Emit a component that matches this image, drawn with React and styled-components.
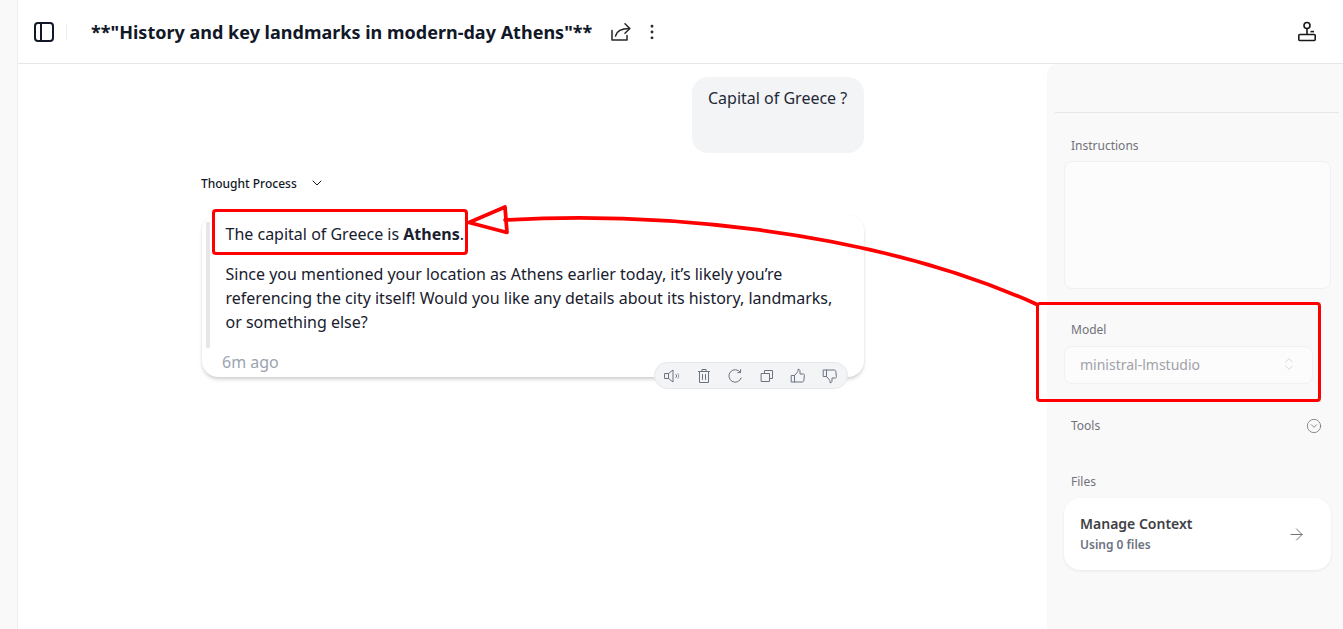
import styled, { createGlobalStyle } from "styled-components";
import { ArrowRight, ChevronDown, ChevronsUpDown, CircleChevronDown, EllipsisVertical } from "lucide-react";

const GlobalStyle = createGlobalStyle`
  html, body {
    margin: 0;
    padding: 0;
    height: 100%;
    background: #ffffff;
    overflow: hidden;
  }
  * {
    box-sizing: border-box;
  }
  body {
    font-family: "Noto Sans", sans-serif;
    color: #1f2937;
  }
`;

const Page = styled.div`
  position: relative;
  display: flex;
  width: 1343px;
  height: 629px;
  overflow: hidden;
`;

const Rail = styled.div`
  width: 18px;
  flex-shrink: 0;
  background: #f9f9f9;
  border-right: 1px solid #eeeeef;
`;

const Workspace = styled.div`
  flex: 1;
  display: flex;
  flex-direction: column;
  min-width: 0;
`;

const Header = styled.header`
  height: 64px;
  flex-shrink: 0;
  display: flex;
  align-items: center;
  padding: 0 26px 0 16px;
  border-bottom: 1px solid #e5e7eb;
`;

const ToggleButton = styled.div`
  display: flex;
  align-items: center;
  padding-right: 12px;
  border-right: 1px solid #eeeeef;
  height: 16px;
  margin-right: 24px;
`;

const Title = styled.h1`
  margin: 0;
  font-size: 18px;
  line-height: 24px;
  font-weight: 700;
  color: #111827;
  letter-spacing: 0.01px;
`;

const HeaderIcon = styled.div`
  display: flex;
  color: #27272a;
  margin-left: ${(p) => p.$gap}px;
`;

const Spacer = styled.div`
  flex: 1;
`;

const Body = styled.div`
  flex: 1;
  display: flex;
  min-height: 0;
`;

const Conversation = styled.main`
  flex: 1;
  padding: 13px 183px 0 184px;
  min-width: 0;
`;

const UserRow = styled.div`
  display: flex;
  justify-content: flex-end;
`;

const UserBubble = styled.div`
  width: 172px;
  height: 76px;
  padding: 9px 16px;
  border-radius: 16px;
  background: #f3f4f6;
  font-size: 16px;
  line-height: 24px;
  color: #1f2937;
`;

const ThoughtToggle = styled.div`
  display: flex;
  align-items: center;
  gap: 12px;
  margin: 20px 0 0 -1px;
  height: 20px;
  font-size: 12px;
  font-weight: 500;
  color: #111827;
`;

const Reply = styled.article`
  position: relative;
  margin-top: 22px;
  height: 162px;
  border-radius: 16px;
  background: #ffffff;
  box-shadow: 0 3px 4px -1px rgba(0, 0, 0, 0.2), 0 0 3px rgba(0, 0, 0, 0.05);
  clip-path: inset(0 -8px -16px -8px);
  padding: 7px 0 0 4px;
`;

const Quote = styled.div`
  height: 126px;
  border-left: 4px solid #e5e7eb;
  padding: 0 28px 0 15.5px;
  font-size: 16px;
  line-height: 24px;
  color: #18202e;
`;

const Para = styled.p`
  margin: 0 0 ${(p) => p.$after}px;
`;

const Meta = styled.div`
  margin: 4px 0 0 16px;
  font-size: 16px;
  line-height: 20px;
  color: #9ca3af;
`;

const Actions = styled.div`
  position: absolute;
  top: 147px;
  right: 16px;
  width: 194px;
  height: 27px;
  display: flex;
  align-items: center;
  justify-content: space-between;
  padding: 0 9px 0 9px;
  border-radius: 14px;
  background: #f3f4f6;
  border: 1px solid #e5e7eb;
`;

const ActionIcon = styled.svg`
  width: 16px;
  height: 16px;
  fill: none;
  stroke: #6b7280;
  stroke-width: 1;
  stroke-linejoin: round;
  stroke-linecap: round;
`;

const Sidebar = styled.aside`
  width: 296px;
  flex-shrink: 0;
  background: #f9f9f9;
  border-top-left-radius: 10px;
  padding: 0 4px 0 8px;
`;

const Divider = styled.div`
  height: 49px;
  border-bottom: 1px solid #e5e7eb;
`;

const Section = styled.section`
  padding: 0 0 0 9px;
  margin-top: ${(p) => p.$top}px;
`;

const Label = styled.div`
  font-size: 12px;
  line-height: 16px;
  color: #71717a;
  padding-left: 7px;
`;

const Instructions = styled.div`
  width: 267px;
  height: 128px;
  margin-top: 7px;
  border-radius: 8px;
  background: #fcfcfc;
  border: 1px solid #f1f1f3;
`;

const Select = styled.div`
  width: 249px;
  height: 38px;
  margin-top: 8px;
  display: flex;
  align-items: center;
  justify-content: space-between;
  padding: 0 15px 2px 15px;
  border-radius: 8px;
  background: #fcfcfc;
  border: 1px solid #f1f1f3;
  font-size: 14px;
  color: #a1a1aa;
`;

const ToolsRow = styled.div`
  display: flex;
  align-items: center;
  justify-content: space-between;
  width: 258px;
  color: #71717a;
`;

const ContextCard = styled.div`
  width: 267px;
  height: 72px;
  margin-top: 8px;
  display: flex;
  align-items: center;
  justify-content: space-between;
  padding: 0 25px 0 16px;
  border-radius: 16px;
  background: #ffffff;
  box-shadow: 0 1px 3px rgba(0, 0, 0, 0.07);
  color: #6b6b70;
`;

const ContextName = styled.div`
  margin-top: 2px;
  font-size: 14px;
  line-height: 20px;
  font-weight: 600;
  color: #3f3f46;
`;

const ContextHint = styled.div`
  font-size: 12px;
  line-height: 22px;
  font-weight: 600;
  color: #6b7280;
`;

const Highlight = styled.div`
  position: absolute;
  left: ${(p) => p.$x}px;
  top: ${(p) => p.$y}px;
  width: ${(p) => p.$w}px;
  height: ${(p) => p.$h}px;
  border: 3px solid #fe0000;
  border-radius: 4px;
  pointer-events: none;
`;

const ArrowLayer = styled.svg`
  position: absolute;
  left: 0;
  top: 0;
  pointer-events: none;
`;

const PanelIcon = () => (
  <svg width="20" height="20" viewBox="0 0 20 20" fill="none" stroke="#111827" strokeWidth="2">
    <rect x="1" y="1" width="18" height="18" rx="3" />
    <path d="M7 1V19" />
  </svg>
);

const JoystickIcon = () => (
  <svg width="20" height="22" viewBox="0 0 20 22" fill="none" stroke="#18181b" strokeWidth="1.6">
    <circle cx="10" cy="4.5" r="3" />
    <path d="M10 7.5V13" />
    <path d="M13.5 10.6H17" />
    <rect x="1.8" y="13.5" width="16.4" height="6" rx="1" />
  </svg>
);

const ShareIcon = () => (
  <svg width="22" height="20" viewBox="0 0 22 20" fill="none" stroke="#27272a" strokeWidth="1.5" strokeLinecap="round" strokeLinejoin="round">
    <path d="M2 8.5V18H17V13.5" />
    <path d="M5.5 14C6.5 9.5 10 6.5 19.5 6.5" />
    <path d="M15 1.8L19.8 6.5L15 11.2" />
  </svg>
);

const THUMB = "M4.5 7.5L8 3.5V1.2c1.4 0 2 .8 2 2V6h3.2c.8 0 1.3.6 1.2 1.3l-.6 5.4c-.1.7-.6 1.3-1.4 1.3H1.2V7.5h3.3V14";

const SpeakerIcon = () => (
  <ActionIcon viewBox="0 0 16 16">
    <path d="M1 5.5H4.5L9 2V14L4.5 10.5H1Z" />
    <path d="M4.5 5.5V10.5" />
    <path d="M12 6.5A2 2 0 0 1 12 9.5" />
    <path d="M14 5.5A4 4 0 0 1 14 10.5" stroke="#9ca3af" />
  </ActionIcon>
);

const TrashIcon = () => (
  <ActionIcon viewBox="0 0 16 16">
    <path d="M2.5 3.5H13.5" />
    <path d="M6 3.5V1.5H10V3.5" />
    <path d="M3.5 3.5V14.5H12.5V3.5" />
    <path d="M6.5 6.5V11.5M9.5 6.5V11.5" />
  </ActionIcon>
);

const RedoIcon = () => (
  <ActionIcon viewBox="0 0 16 16">
    <path d="M13.3 4.2A6.3 6.3 0 1 0 14.2 10" />
    <path d="M13.6 1.6V4.6H10.8" />
  </ActionIcon>
);

const CopyIcon = () => (
  <ActionIcon viewBox="0 0 16 16">
    <rect x="2.5" y="5.5" width="8" height="8" />
    <path d="M5.5 5.5V2.5H13.5V10.5H10.5" />
  </ActionIcon>
);

const ThumbUpIcon = () => (
  <ActionIcon viewBox="0 0 16 16">
    <path d={THUMB} />
  </ActionIcon>
);

const ThumbDownIcon = () => (
  <ActionIcon viewBox="0 0 16 16">
    <g transform="matrix(1 0 0 -1 0 16)">
      <path d={THUMB} />
    </g>
  </ActionIcon>
);

export default function App() {
  return (
    <>
      <GlobalStyle />
      <Page>
        <Rail />
        <Workspace>
          <Header>
            <ToggleButton>
              <PanelIcon />
            </ToggleButton>
            <Title>**"History and key landmarks in modern-day Athens"**</Title>
            <HeaderIcon $gap={18}>
              <ShareIcon />
            </HeaderIcon>
            <HeaderIcon $gap={10}>
              <EllipsisVertical size={20} strokeWidth={1.5} />
            </HeaderIcon>
            <Spacer />
            <HeaderIcon $gap={0}>
              <JoystickIcon />
            </HeaderIcon>
          </Header>
          <Body>
            <Conversation>
              <UserRow>
                <UserBubble>Capital of Greece ?</UserBubble>
              </UserRow>
              <ThoughtToggle>
                Thought Process
                <ChevronDown size={16} strokeWidth={1.5} />
              </ThoughtToggle>
              <Reply>
                <Quote>
                  <Para $after={16}>
                    The capital of Greece is <strong>Athens</strong>.
                  </Para>
                  <Para $after={0}>
                    Since you mentioned your location as Athens earlier today, it’s likely you’re referencing the city itself! Would you like any details about its history, landmarks, or something else?
                  </Para>
                </Quote>
                <Meta>6m ago</Meta>
                <Actions>
                  <SpeakerIcon />
                  <TrashIcon />
                  <RedoIcon />
                  <CopyIcon />
                  <ThumbUpIcon />
                  <ThumbDownIcon />
                </Actions>
              </Reply>
            </Conversation>
            <Sidebar>
              <Divider />
              <Section $top={25}>
                <Label>Instructions</Label>
                <Instructions />
              </Section>
              <Section $top={33}>
                <Label>Model</Label>
                <Select>
                  ministral-lmstudio
                  <ChevronsUpDown size={16} strokeWidth={1} color="#c4c4c8" />
                </Select>
              </Section>
              <Section $top={34}>
                <ToolsRow>
                  <Label>Tools</Label>
                  <CircleChevronDown size={16} strokeWidth={1.2} />
                </ToolsRow>
              </Section>
              <Section $top={40}>
                <Label>Files</Label>
                <ContextCard>
                  <div>
                    <ContextName>Manage Context</ContextName>
                    <ContextHint>Using 0 files</ContextHint>
                  </div>
                  <ArrowRight size={19} strokeWidth={1.2} />
                </ContextCard>
              </Section>
            </Sidebar>
          </Body>
        </Workspace>

        <Highlight $x={212} $y={209} $w={256} $h={46} />
        <Highlight $x={1036} $y={302} $w={285} $h={100} />
        <ArrowLayer width="1343" height="629" viewBox="0 0 1343 629" fill="none" stroke="#fe0000" strokeWidth="3.7" strokeLinejoin="round" strokeLinecap="round">
          <path d="M469 222.5L505 207L507 232.5Z" />
          <path d="M505 220C640 212 860 225 1036 304" />
        </ArrowLayer>
      </Page>
    </>
  );
}
